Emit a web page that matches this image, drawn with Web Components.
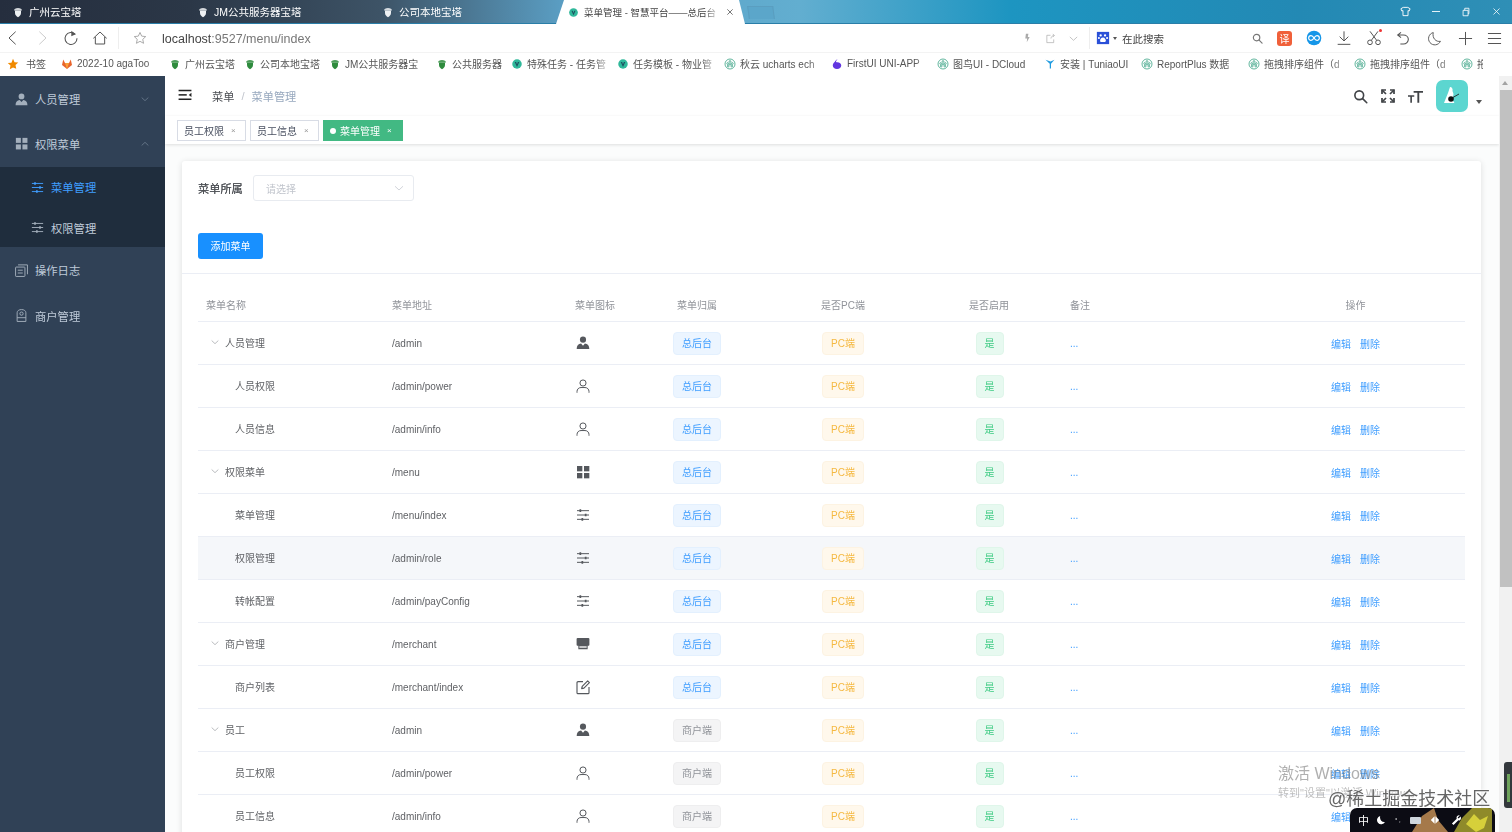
<!DOCTYPE html>
<html lang="zh">
<head>
<meta charset="utf-8">
<title>菜单管理</title>
<style>
  html, body { margin: 0; height: 832px; overflow: hidden; background: #fff; }
  body {
    display: flex;
    flex-direction: column;
    font-family: "Liberation Sans", "Noto Sans CJK SC", sans-serif;
    color: #606266;
  }
  /* the reference is a soft, rescaled capture */
  body > * { filter: blur(.3px); }
</style>
</head>
<body>
<browser-tabs></browser-tabs>
<browser-toolbar></browser-toolbar>
<bookmark-bar></bookmark-bar>
<app-shell></app-shell>
<desktop-marks></desktop-marks>

<script>
const ICONS = {
  personSolid: '<circle cx="12" cy="7" r="4.6" fill="currentColor"/><path d="M2.5 21c0-5 2.6-8 6.6-8.2L12 16l2.9-3.2c4 .2 6.6 3.2 6.6 8.2z" fill="currentColor"/>',
  personLine: '<g fill="none" stroke="currentColor" stroke-width="1.5"><circle cx="12" cy="7.5" r="4.6"/><path d="M3 21.5v-1.2c0-3.4 2.6-6 6-6h6c3.4 0 6 2.6 6 6v1.2" stroke-linecap="round"/></g>',
  grid: '<g fill="currentColor"><rect x="3" y="3" width="8" height="8"/><rect x="13.5" y="3" width="8" height="8"/><rect x="3" y="13.5" width="8" height="8"/><rect x="13.5" y="13.5" width="8" height="8"/></g>',
  sliders: '<g fill="none" stroke="currentColor" stroke-width="1.5"><path d="M3 5.5h18M3 12h18M3 18.5h18"/><path d="M8 3.5v4M16 10v4M11 16.500v4" stroke-width="2.6"/></g>',
  store: '<path d="M4 3h16a1.6 1.6 0 0 1 1.6 1.6V13c0 1-.7 1.7-1.6 1.7h-1V20H5v-5.3H4c-.9 0-1.6-.7-1.6-1.7V4.6A1.6 1.6 0 0 1 4 3z" fill="currentColor"/><path d="M6.5 15.5h11v2h-11z" fill="#fff"/>',
  edit: '<g fill="none" stroke="currentColor" stroke-width="1.7"><path d="M12 4H4.5A1.5 1.5 0 0 0 3 5.5v15A1.5 1.5 0 0 0 4.5 22h15a1.5 1.5 0 0 0 1.5-1.5V12"/><path d="M10 14.500l.8-3.500L19 2.800l2.600 2.600-8.200 8.300z" stroke-linejoin="round"/></g>',
  log: '<g fill="none" stroke="currentColor" stroke-width="1.5"><rect x="2.5" y="6.5" width="15" height="15" rx="1"/><path d="M6.5 3h15v15M6 11.5h8M6 16h8"/></g>',
  merchant: '<g fill="none" stroke="currentColor" stroke-width="1.5"><path d="M5 21.5V7.5C5 4.5 8 2.500 12 2.500s7 2 7 5v14z" stroke-linejoin="round"/><circle cx="12" cy="9" r="2.6"/><path d="M5 15.500h14"/></g>',
  chevron: '<path d="M4 8.500l8 7.500 8-7.500" fill="none" stroke="currentColor" stroke-width="1.5"/>',
  chevronUp: '<path d="M4 15.500l8-7.500 8 7.500" fill="none" stroke="currentColor" stroke-width="1.5"/>',
  hamburger: '<g fill="currentColor"><rect x="1" y="3" width="22" height="2.6"/><rect x="1" y="10.500" width="14" height="2.6"/><rect x="1" y="18" width="22" height="2.6"/><path d="M23 8v7.500l-4.500-3.700z"/></g>',
  search: '<g fill="none" stroke="currentColor" stroke-width="2.6"><circle cx="10" cy="10" r="7"/><path d="M15.500 15.500l6.500 6.500" stroke-linecap="round"/></g>',
  fullscreen: '<g fill="none" stroke="currentColor" stroke-width="2.6"><path d="M3 9V3h6M21 9V3h-6M3 15v6h6M21 15v6h-6"/><path d="M3 3l6 6M21 3l-6 6M3 21l6-6M21 21l-6-6"/></g>',
  textSize: '<g fill="currentColor"><path d="M9 3h15v2.800h-6V22h-3V5.800H9z"/><path d="M0 10h10v2.400H6.300V22H3.700v-9.600H0z"/></g>',
  acorn: '<path d="M6 9h12v5c0 4-3 7-6 8.500C9 21 6 18 6 14z" fill="currentColor"/><path d="M4 9c0-2.500 3-5 8-5s8 2.500 8 5z" fill="currentColor" opacity=".85"/>',
  vue: '<circle cx="12" cy="12" r="9.5" fill="#2fb89a"/><path d="M7.500 8h2.800L12 13l1.700-5h2.800L12 18z" fill="#1e4d5f"/>',
  globe: '<g fill="none" stroke="#2f9e7e" stroke-width="1.5"><circle cx="12" cy="12" r="10"/><circle cx="12" cy="7" r="1.8"/><circle cx="7.500" cy="11" r="1.8"/><circle cx="16.500" cy="11" r="1.8"/><circle cx="12" cy="12.500" r="1.4"/><circle cx="8.500" cy="16" r="1.8"/><circle cx="15.500" cy="16" r="1.8"/></g>',
  back: '<path d="M16 2.500L6 12l10 9.500" fill="none" stroke="currentColor" stroke-width="1.5"/>',
  forward: '<path d="M8 2.500L18 12 8 21.500" fill="none" stroke="currentColor" stroke-width="1.5"/>',
  reload: '<path d="M18.500 6.500A9 9 0 1 0 21 12.500" fill="none" stroke="currentColor" stroke-width="1.6"/><path d="M12.500 1l6.500 5.500-6.500 3z" fill="currentColor"/>',
  home: '<path d="M2 12.500L12 3l10 9.500M5 10.500V21h14V10.500" fill="none" stroke="currentColor" stroke-width="1.5"/>',
  star: '<path d="M12 2.500l2.900 6.300 6.900.8-5.100 4.700 1.400 6.800-6.100-3.400-6.100 3.400 1.400-6.800-5.100-4.700 6.900-.8z" fill="none" stroke="currentColor" stroke-width="1.4"/>',
  starFill: '<path d="M12 1.500l3.100 6.800 7.400.9-5.500 5 1.500 7.300L12 18.900l-6.500 3.600L7 15.200l-5.500-5 7.400-.9z" fill="#f08a00"/>',
  bolt: '<path d="M13 2H7L5.500 13H10l-1 9 7-12.500h-4.500z" fill="currentColor"/>',
  share: '<path d="M12 5H4v16h15v-7M13 12c.5-4 3-6.500 7-6.500M17 2l3.500 3.500L17 9" fill="none" stroke="currentColor" stroke-width="1.5"/>',
  download: '<path d="M12 2v14M5.500 10l6.500 6.500 6.500-6.500M2.500 21.500h19" fill="none" stroke="currentColor" stroke-width="1.5"/>',
  scissors: '<g fill="none" stroke="currentColor" stroke-width="1.5"><circle cx="6" cy="18.500" r="3.500"/><circle cx="18" cy="18.500" r="3.500"/><path d="M8 15.500L18 2M16 15.500L6 2"/></g>',
  undo: '<path d="M9 3.500L4 7.500l5 4M4 7.500h8.500c4.500 0 7.500 3 7.500 6.500s-3 7-7.500 7H8" fill="none" stroke="currentColor" stroke-width="1.6"/>',
  moon: '<path d="M10 2.500a10 10 0 1 0 11.500 14c-7 1.500-13.500-5-11.500-14z" fill="none" stroke="currentColor" stroke-width="1.5"/>',
  moonFill: '<path d="M10 2.500a10 10 0 1 0 11.500 14c-7 1.500-13.500-5-11.500-14z" fill="currentColor"/>',
  plus: '<path d="M12 1.500v21M1.500 12h21" fill="none" stroke="currentColor" stroke-width="1.6"/>',
  menu: '<path d="M1.500 4h21M1.500 12h21M1.500 20h21" fill="none" stroke="currentColor" stroke-width="1.6"/>',
  shirt: '<path d="M7 3h10l5 3-2 5-2.500-1v11h-11V10L4 11 2 6z" fill="none" stroke="currentColor" stroke-width="2"/>',
  restore: '<path d="M5 8h12v13H5zM9 8V3h10v13h-2" fill="none" stroke="currentColor" stroke-width="2"/>',
  close: '<path d="M4 4l16 16M20 4L4 20" fill="none" stroke="currentColor" stroke-width="2"/>',
  paw: '<rect x="1.500" y="1.500" width="21" height="21" fill="#2a50d8"/><g fill="#fff"><circle cx="8" cy="7.500" r="2"/><circle cx="15.500" cy="7.500" r="2"/><circle cx="5" cy="12" r="1.8"/><circle cx="19" cy="12" r="1.8"/><path d="M12 11c3 0 5 3.500 5 5.500S14 19 12 19s-5 .5-5-2.500 2-5.500 5-5.500z"/></g>',
  gitlab: '<path d="M12 22L2 14l2.500-11L8 10h8l3.500-7L22 14z" fill="#e8642d"/><path d="M12 22L8 10h8z" fill="#f9a13a"/>',
  firstui: '<path d="M13 2c-1 2-3 3.500-3 5.500.5 1 1.500 1 2.500 1 5 0 8 3 8 6.500S17 22 12 22s-8.500-3-8.500-7.500c0-4 4-6 5-8.500 1-1.500 3-3 4.500-4z" fill="#6236e0"/>',
  tuniao: '<path d="M3 3.500L13 7l8-3.500-7 8V21h-2.500v-9.500z" fill="#1f9be0"/>',
  infinity: '<circle cx="12" cy="12" r="11" fill="#1596e8"/><path d="M12 12c-1.500-2.500-3-3.500-4.500-3.500a3.500 3.500 0 0 0 0 7c1.500 0 3-1 4.500-3.500s3-3.500 4.500-3.500a3.500 3.500 0 0 1 0 7c-1.500 0-3-1-4.500-3.500z" fill="none" stroke="#fff" stroke-width="1.8"/>',
  wrench: '<path d="M21 3l-4.500 4.500-2-2L19 1c-3-1-7 1-7 5 0 1 .2 1.500.5 2L2 18.500 5.500 22 16 11.500c4 1.500 7.500-3.500 5-8.500z" fill="currentColor"/>',
  arrows: '<path d="M11 3v18l-9-9zM13 3l9 9-9 9z" fill="currentColor"/>'
};

class UiIcon extends HTMLElement {
  connectedCallback() {
    const size = this.getAttribute('size') || 16;
    this.attachShadow({ mode: 'open' });
    this.shadowRoot.innerHTML = `
      <style>
        :host { display: inline-flex; flex: none; line-height: 0; }
      </style>
      <svg width="${size}" height="${size}" viewBox="0 0 24 24">${ICONS[this.getAttribute('name')] || ''}</svg>
    `;
  }
}
customElements.define('ui-icon', UiIcon);

class BrowserTabs extends HTMLElement {
  connectedCallback() {
    this.attachShadow({ mode: 'open' });
    this.shadowRoot.innerHTML = `
      <style>
        :host {
          display: flex;
          align-items: center;
          height: 24px;
          flex: none;
          color: #fff;
          font-size: 10.5px;
          box-sizing: border-box;
          padding-left: 12px;
          border-bottom: 1px solid #2a7ea8;
          background: linear-gradient(90deg, #252e3e 0, #2b3747 190px, #3d5366 380px, #5a9dc2 560px, #62aed0 800px, #1d95c1 1010px, #2389b4 1300px, #2f8fb6 100%);
        }
        .tab { display: flex; align-items: center; gap: 5px; width: 185px; flex: none; white-space: nowrap; }
        .tab ui-icon { color: #eef1f3; }
        .active {
          width: 189px;
          height: 24px;
          padding: 0 11px 0 12px;
          box-sizing: border-box;
          margin-top: 1px;
          background: #fff;
          color: #444;
          clip-path: polygon(8px 0, calc(100% - 6px) 0, 100% 100%, 0 100%);
        }
        .active span { flex: 1; overflow: hidden; font-size: 9.5px; -webkit-mask-image: linear-gradient(90deg, #000 88%, transparent); }
        .active .x { color: #333; }
        .ghost { width: 24px; height: 12px; margin: 2px 0 0 3px; border: 1px solid #5a9ec0; border-bottom: 0; background: #5ba6ca; transform: skewX(8deg); }
        .win { margin-left: auto; display: flex; gap: 21px; padding-right: 11px; align-items: center; }
      </style>
      <div class="tab"><ui-icon name="acorn" size="12"></ui-icon><span>广州云宝塔</span></div>
      <div class="tab"><ui-icon name="acorn" size="12"></ui-icon><span>JM公共服务器宝塔</span></div>
      <div class="tab" style="width:174px"><ui-icon name="acorn" size="12"></ui-icon><span>公司本地宝塔</span></div>
      <div class="tab active"><ui-icon name="vue" size="11"></ui-icon><span>菜单管理 - 智慧平台——总后台</span><ui-icon class="x" name="close" size="8"></ui-icon></div>
      <div class="ghost"></div>
      <div class="win">
        <ui-icon name="shirt" size="11"></ui-icon>
        <span style="width:8px;height:1px;background:#e4f2f8"></span>
        <ui-icon name="restore" size="10"></ui-icon>
        <ui-icon name="close" size="9"></ui-icon>
      </div>
    `;
  }
}
customElements.define('browser-tabs', BrowserTabs);

class BrowserToolbar extends HTMLElement {
  connectedCallback() {
    this.attachShadow({ mode: 'open' });
    this.shadowRoot.innerHTML = `
      <style>
        :host {
          display: flex;
          align-items: center;
          height: 28px;
          flex: none;
          box-sizing: border-box;
          padding: 0 10px 0 5px;
          background: #fff;
          color: #555;
          font-size: 12px;
        }
        .nav { display: flex; align-items: center; gap: 13px; }
        .url { margin-left: 15px; color: #777; font-size: 12.5px; padding-top: 1px; }
        .url b { font-weight: 400; color: #444; }
        .sep { width: 1px; height: 22px; background: #eee; margin: 0 10px; }
        .mid { margin-left: auto; display: flex; align-items: center; gap: 12px; color: #aaa; margin-right: 10px; }
        .search { display: flex; align-items: center; gap: 3px; width: 173px; box-sizing: border-box; padding-right: 6px; color: #444; font-size: 10.5px; }
        .search i { width: 0; height: 0; border: 2px solid transparent; border-top: 3px solid #555; margin: 3px 2px 0 0; }
        .search .g { margin-left: auto; color: #777; }
        .tools { display: flex; align-items: center; gap: 14px; margin-left: 8px; }
        .yi { width: 15px; height: 15px; background: #f0603a; color: #fff; border-radius: 3px; font-size: 10px; display: flex; align-items: center; justify-content: center; }
        .dot { position: relative; }
        .dot::after { content: ""; position: absolute; right: 0; top: -1px; width: 3px; height: 3px; background: #e33; border-radius: 50%; }
      </style>
      <div class="nav">
        <ui-icon name="back" size="16"></ui-icon>
        <ui-icon name="forward" size="16" style="color:#ccc"></ui-icon>
        <ui-icon name="reload" size="16"></ui-icon>
        <ui-icon name="home" size="16"></ui-icon>
      </div>
      <div class="sep" style="margin-right:14px"></div>
      <ui-icon name="star" size="14" style="color:#999"></ui-icon>
      <span class="url"><b>localhost</b>:9527/menu/index</span>
      <div class="mid">
        <ui-icon name="bolt" size="10"></ui-icon>
        <ui-icon name="share" size="11"></ui-icon>
        <ui-icon name="chevron" size="11"></ui-icon>
      </div>
      <div class="sep" style="margin:0 6px 0 0"></div>
      <div class="search">
        <ui-icon name="paw" size="14"></ui-icon><i></i><span>在此搜索</span>
        <ui-icon class="g" name="search" size="11"></ui-icon>
      </div>
      <div class="tools">
        <span class="yi">译</span>
        <ui-icon name="infinity" size="16"></ui-icon>
        <ui-icon name="download" size="16"></ui-icon>
        <ui-icon class="dot" name="scissors" size="16" style="margin-right:-3px"></ui-icon>
        <ui-icon name="undo" size="16" style="margin-left:2px"></ui-icon>
        <ui-icon name="moon" size="15" style="margin-left:2px"></ui-icon>
        <ui-icon name="plus" size="15" style="margin-left:2px"></ui-icon>
        <ui-icon name="menu" size="15"></ui-icon>
      </div>
    `;
  }
}
customElements.define('browser-toolbar', BrowserToolbar);

class BookmarkItem extends HTMLElement {
  connectedCallback() {
    const icon = this.getAttribute('icon');
    const gap = this.getAttribute('gap') || 4;
    const fade = this.hasAttribute('fade') ? '-webkit-mask-image: linear-gradient(90deg, #000 82%, rgba(0,0,0,.25));' : '';
    this.attachShadow({ mode: 'open' });
    this.shadowRoot.innerHTML = `
      <style>
        :host {
          display: flex;
          align-items: center;
          gap: ${gap}px;
          flex: none;
          box-sizing: border-box;
          width: ${this.getAttribute('width')}px;
          padding-right: 8px;
          white-space: nowrap;
        }
        span { overflow: hidden; flex: 1; ${fade} }
        ui-icon { color: #2e8b3d; }
      </style>
      <ui-icon name="${icon}" size="12"></ui-icon><span><slot></slot></span>
    `;
  }
}
customElements.define('bookmark-item', BookmarkItem);

class BookmarkBar extends HTMLElement {
  connectedCallback() {
    const items = [
      ['starFill', 54, '书签', 0, 7],
      ['gitlab', 108, '2022-10 agaToo', 1],
      ['acorn', 75, '广州云宝塔'],
      ['acorn', 85, '公司本地宝塔'],
      ['acorn', 107, 'JM公共服务器宝', 1],
      ['acorn', 75, '公共服务器'],
      ['vue', 106, '特殊任务 - 任务管', 1],
      ['vue', 107, '任务模板 - 物业管', 1],
      ['globe', 107, '秋云 ucharts ech', 1],
      ['firstui', 106, 'FirstUI UNI-APP', 1],
      ['globe', 107, '图鸟UI - DCloud'],
      ['tuniao', 97, '安装 | TuniaoUI'],
      ['globe', 107, 'ReportPlus 数据', 1],
      ['globe', 106, '拖拽排序组件（d', 1],
      ['globe', 107, '拖拽排序组件（d', 1],
      ['globe', 30, '拖']
    ];
    this.attachShadow({ mode: 'open' });
    this.shadowRoot.innerHTML = `
      <style>
        :host {
          display: flex;
          align-items: center;
          height: 24px;
          flex: none;
          box-sizing: border-box;
          padding: 0 0 2px 7px;
          background: #fff;
          border-top: 1px solid #f3f3f3;
          color: #555;
          font-size: 10px;
          overflow: hidden;
        }
      </style>
      ${items.map(([icon, w, text, fade, gap]) => `<bookmark-item icon="${icon}" width="${w}" gap="${gap || 4}"${fade ? ' fade' : ''}>${text}</bookmark-item>`).join('')}
    `;
  }
}
customElements.define('bookmark-bar', BookmarkBar);

class SideItem extends HTMLElement {
  connectedCallback() {
    const sub = this.hasAttribute('sub');
    const arrow = this.getAttribute('arrow');
    const active = this.hasAttribute('active');
    this.attachShadow({ mode: 'open' });
    this.shadowRoot.innerHTML = `
      <style>
        :host {
          display: flex;
          align-items: center;
          gap: 6px;
          height: ${sub ? 40 : 45}px;
          box-sizing: border-box;
          padding-left: ${sub ? 30 : 14}px;
          padding-right: 15px;
          font-size: 11.3px;
          color: ${active ? '#409eff' : '#bfcbd9'};
          background: ${sub ? '#1f2d3d' : 'transparent'};
        }
        .lead { color: ${active ? '#409eff' : '#a3afbc'}; }
        .arrow { margin-left: auto; color: #7f8ea0; }
      </style>
      <ui-icon class="lead" name="${this.getAttribute('icon')}" size="15"></ui-icon>
      <span><slot></slot></span>
      ${arrow ? `<ui-icon class="arrow" name="${arrow}" size="10"></ui-icon>` : ''}
    `;
  }
}
customElements.define('side-item', SideItem);

class SideMenu extends HTMLElement {
  connectedCallback() {
    this.attachShadow({ mode: 'open' });
    this.shadowRoot.innerHTML = `
      <style>
        :host { display: block; width: 165px; flex: none; background: #304156; }
      </style>
      <side-item icon="personSolid" arrow="chevron" style="height:46px">人员管理</side-item>
      <side-item icon="grid" arrow="chevronUp" style="padding-bottom:2px">权限菜单</side-item>
      <side-item icon="sliders" sub active>菜单管理</side-item>
      <side-item icon="sliders" sub style="padding-top:1px">权限管理</side-item>
      <side-item icon="log" style="height:47px;padding-bottom:1px">操作日志</side-item>
      <side-item icon="merchant" style="padding-bottom:2px">商户管理</side-item>
    `;
  }
}
customElements.define('side-menu', SideMenu);

class TopHeader extends HTMLElement {
  connectedCallback() {
    this.attachShadow({ mode: 'open' });
    this.shadowRoot.innerHTML = `
      <style>
        :host {
          display: flex;
          align-items: center;
          height: 40px;
          flex: none;
          box-sizing: border-box;
          padding: 0 17px 0 13px;
          background: #fff;
          font-size: 11.2px;
          color: #4a4d52;
        }
        .crumb { display: flex; align-items: center; margin: -1px 0 0 20px; gap: 7px; }
        .crumb i { font-style: normal; color: #c0c4cc; }
        .crumb em { font-style: normal; color: #97a8be; }
        .right { margin-left: auto; display: flex; align-items: center; gap: 12px; color: #404347; }
        .avatar { display: block; margin-left: 1px; margin-right: 1px; line-height: 0; }
        .caret { width: 0; height: 0; border: 3px solid transparent; border-top: 4px solid #555; margin: 14px 0 0 -5px; }
      </style>
      <ui-icon name="hamburger" size="14" style="color:#222;margin-top:-2px"></ui-icon>
      <div class="crumb"><span>菜单</span><i>/</i><em>菜单管理</em></div>
      <div class="right">
        <ui-icon name="search" size="15"></ui-icon>
        <ui-icon name="fullscreen" size="16"></ui-icon>
        <ui-icon name="textSize" size="15"></ui-icon>
        <div class="avatar">
          <svg width="32" height="32" viewBox="0 0 32 32">
            <rect width="32" height="32" rx="7" fill="#5cd6d0"/>
            <path d="M14 7c2 0 3 2 2.500 4l1 3-1 6 2 3H8l2-5 2-5z" fill="#fff"/>
            <circle cx="15" cy="19" r="2.800" fill="#111"/>
            <path d="M16 18l7-4" stroke="#111" stroke-width=".8"/>
          </svg>
        </div>
        <div class="caret"></div>
      </div>
    `;
  }
}
customElements.define('top-header', TopHeader);

class TagStrip extends HTMLElement {
  connectedCallback() {
    this.attachShadow({ mode: 'open' });
    this.shadowRoot.innerHTML = `
      <style>
        :host {
          display: flex;
          align-items: flex-start;
          gap: 4px;
          height: 28px;
          flex: none;
          box-sizing: border-box;
          padding: 4px 0 0 12px;
          background: #fff;
          box-shadow: 0 1px 3px rgba(0,0,0,.12);
          position: relative;
          font-size: 10px;
          color: #495060;
        }
        .tag {
          display: flex;
          align-items: center;
          height: 21px;
          box-sizing: border-box;
          width: 69px;
          padding-left: 6px;
          gap: 6px;
          border: 1px solid #d8dce5;
          background: #fff;
        }
        .tag small { font-size: 8px; color: #999; margin-left: 1px; }
        .on { width: 80px; background: #42b983; border-color: #42b983; color: #fff; }
        .on small { color: #fff; }
        .on i { width: 6px; height: 6px; border-radius: 50%; background: #fff; margin-right: -2px; }
      </style>
      <div class="tag"><span>员工权限</span><small>×</small></div>
      <div class="tag"><span>员工信息</span><small>×</small></div>
      <div class="tag on"><i></i><span>菜单管理</span><small>×</small></div>
    `;
  }
}
customElements.define('tag-strip', TagStrip);

class MenuFilter extends HTMLElement {
  connectedCallback() {
    this.attachShadow({ mode: 'open' });
    this.shadowRoot.innerHTML = `
      <style>
        :host {
          display: flex;
          flex-direction: column;
          align-items: flex-start;
          gap: 32px;
          padding: 14px 16px;
          border-bottom: 1px solid #ebeef5;
          font-size: 11.2px;
        }
        .row { display: flex; align-items: center; gap: 10px; }
        label { color: #4f5257; width: 45px; white-space: nowrap; text-shadow: 0 0 .4px #4f5257; margin-top: -1px; }
        .select {
          display: flex;
          align-items: center;
          justify-content: space-between;
          width: 161px;
          height: 26px;
          box-sizing: border-box;
          padding: 0 8px 0 12px;
          border: 1px solid #e8ebf0;
          border-radius: 3px;
          color: #c0c4cc;
          font-size: 10px;
        }
        button {
          width: 65px;
          height: 26px;
          padding: 0 0 2px;
          border: 0;
          border-radius: 3px;
          background: #1890ff;
          color: #fff;
          font: inherit;
          font-size: 10px;
        }
      </style>
      <div class="row">
        <label>菜单所属</label>
        <div class="select"><span>请选择</span><ui-icon name="chevron" size="12"></ui-icon></div>
      </div>
      <button>添加菜单</button>
    `;
  }
}
customElements.define('menu-filter', MenuFilter);

class StatusTag extends HTMLElement {
  connectedCallback() {
    const kinds = {
      blue: ['#ecf5ff', '#e3f0fe', '#409eff'],
      gray: ['#f4f4f5', '#eeeeef', '#909399'],
      orange: ['#fff8ec', '#fdf3e2', '#f5b942'],
      green: ['#e7f9f0', '#dff6ea', '#3ccb82']
    };
    const [bg, border, color] = kinds[this.getAttribute('kind')];
    this.attachShadow({ mode: 'open' });
    this.shadowRoot.innerHTML = `
      <style>
        :host {
          display: inline-flex;
          align-items: center;
          height: 23px;
          box-sizing: border-box;
          padding: 0 8px 1px;
          border: 1px solid ${border};
          border-radius: 4px;
          background: ${bg};
          color: ${color};
          font-size: 10px;
          white-space: nowrap;
        }
      </style>
      <slot></slot>
    `;
  }
}
customElements.define('status-tag', StatusTag);

class MenuRow extends HTMLElement {
  connectedCallback() {
    const d = this.data;
    this.attachShadow({ mode: 'open' });
    this.shadowRoot.innerHTML = `
      <style>
        :host {
          display: grid;
          grid-template-columns: var(--cols);
          align-items: center;
          height: 43px;
          box-sizing: border-box;
          border-bottom: 1px solid #ebeef5;
          font-size: 10px;
          color: #606266;
          background: ${d.hover ? '#f5f7fa' : '#fff'};
        }
        .name { display: flex; align-items: center; gap: 5px; margin-top: -2px; padding-left: ${d.parent ? 12 : 37}px; white-space: nowrap; }
        .name ui-icon { color: #909399; }
        .pad { padding-left: 8px; }
        .icon { padding-left: 8px; margin-top: -1px; display: flex; color: #55585d; }
        .mid { display: flex; justify-content: center; }
        .note { padding-left: 8px; color: #409eff; margin-top: 1px; }
        .ops { display: flex; justify-content: center; gap: 9px; color: #409eff; margin-top: 1px; }
      </style>
      <div class="name">${d.parent ? '<ui-icon name="chevron" size="10"></ui-icon>' : ''}<span>${d.name}</span></div>
      <div class="pad">${d.path}</div>
      <div class="icon"><ui-icon name="${d.icon}" size="16"></ui-icon></div>
      <div class="mid"><status-tag kind="${d.owner === '总后台' ? 'blue' : 'gray'}">${d.owner}</status-tag></div>
      <div class="mid"><status-tag kind="orange">PC端</status-tag></div>
      <div class="mid"><status-tag kind="green" style="margin-left:1px">是</status-tag></div>
      <div class="note">...</div>
      <div class="ops"><span>编辑</span><span>删除</span></div>
    `;
  }
}
customElements.define('menu-row', MenuRow);

class MenuTable extends HTMLElement {
  connectedCallback() {
    const rows = [
      { name: '人员管理', path: '/admin', icon: 'personSolid', owner: '总后台', parent: true },
      { name: '人员权限', path: '/admin/power', icon: 'personLine', owner: '总后台' },
      { name: '人员信息', path: '/admin/info', icon: 'personLine', owner: '总后台' },
      { name: '权限菜单', path: '/menu', icon: 'grid', owner: '总后台', parent: true },
      { name: '菜单管理', path: '/menu/index', icon: 'sliders', owner: '总后台' },
      { name: '权限管理', path: '/admin/role', icon: 'sliders', owner: '总后台', hover: true },
      { name: '转帐配置', path: '/admin/payConfig', icon: 'sliders', owner: '总后台' },
      { name: '商户管理', path: '/merchant', icon: 'store', owner: '总后台', parent: true },
      { name: '商户列表', path: '/merchant/index', icon: 'edit', owner: '总后台' },
      { name: '员工', path: '/admin', icon: 'personSolid', owner: '商户端', parent: true },
      { name: '员工权限', path: '/admin/power', icon: 'personLine', owner: '商户端' },
      { name: '员工信息', path: '/admin/info', icon: 'personLine', owner: '商户端' }
    ];
    this.attachShadow({ mode: 'open' });
    this.shadowRoot.innerHTML = `
      <style>
        :host {
          display: block;
          padding: 14px 16px 0;
          --cols: 186px 183px 57px 146px 146px 146px 184px 219px;
        }
        .head {
          display: grid;
          grid-template-columns: var(--cols);
          align-items: center;
          height: 34px;
          box-sizing: border-box;
          border-bottom: 1px solid #ebeef5;
          font-size: 10px;
          color: #909399;
          white-space: nowrap;
        }
        .head div { padding-left: 8px; }
        .head .c { padding: 0; text-align: center; }
      </style>
      <div class="head">
        <div>菜单名称</div><div>菜单地址</div><div>菜单图标</div>
        <div class="c">菜单归属</div><div class="c">是否PC端</div><div class="c">是否启用</div>
        <div>备注</div><div class="c">操作</div>
      </div>
      <div id="rows"></div>
    `;
    const box = this.shadowRoot.getElementById('rows');
    rows.forEach(r => {
      const row = document.createElement('menu-row');
      row.data = r;
      box.appendChild(row);
    });
  }
}
customElements.define('menu-table', MenuTable);

class AppShell extends HTMLElement {
  connectedCallback() {
    this.attachShadow({ mode: 'open' });
    this.shadowRoot.innerHTML = `
      <style>
        :host { display: flex; flex: 1; min-height: 0; overflow: hidden; }
        main { flex: 1; min-width: 0; display: flex; flex-direction: column; }
        .content { flex: 1; min-height: 0; overflow: hidden; padding: 17px 18px 0 17px; background: #fbfcfc; }
        .card { background: #fff; border-radius: 3px; box-shadow: 0 1px 6px rgba(0,0,0,.12); height: 800px; }
        .scroll { width: 13px; flex: none; background: #f1f1f1; position: relative; padding-top: 14px; box-sizing: border-box; }
        .scroll::before { content: ""; position: absolute; left: 3px; top: 5px; border: 3.5px solid transparent; border-bottom: 4px solid #a3a3a3; border-top: 0; }
        .scroll div { height: 497px; background: #c1c1c1; margin-left: 1px; }
      </style>
      <side-menu></side-menu>
      <main>
        <top-header></top-header>
        <tag-strip></tag-strip>
        <div class="content">
          <div class="card">
            <menu-filter></menu-filter>
            <menu-table></menu-table>
          </div>
        </div>
      </main>
      <div class="scroll"><div></div></div>
    `;
  }
}
customElements.define('app-shell', AppShell);

// activation text, site watermark and the tray that the capture left over the page
class DesktopMarks extends HTMLElement {
  connectedCallback() {
    this.attachShadow({ mode: 'open' });
    this.shadowRoot.innerHTML = `
      <style>
        :host { position: fixed; inset: 0; pointer-events: none; display: block; }
        .act { position: absolute; left: 1278px; top: 760px; color: rgba(110,110,110,.55); font-size: 16px; white-space: nowrap; }
        .act2 { position: absolute; left: 1278px; top: 784px; color: rgba(110,110,110,.45); font-size: 11px; white-space: nowrap; }
        .wm { position: absolute; left: 1328px; top: 784px; color: #666; font-size: 18px; white-space: nowrap; text-shadow: 0 0 2px #fff, 0 0 2px #fff; }
        .tray {
          position: absolute;
          left: 1350px;
          top: 808px;
          width: 145px;
          height: 24px;
          display: flex;
          align-items: center;
          box-sizing: border-box;
          padding-left: 8px;
          border-radius: 7px 7px 0 0;
          overflow: hidden;
          color: #fff;
          font-size: 11px;
          background: #0c0c14;
        }
        .tray svg.art { position: absolute; left: 0; top: 0; }
        .tray > *:not(.art) { position: relative; }
        .meter {
          position: absolute;
          left: 1504px;
          top: 762px;
          width: 8px;
          height: 46px;
          box-sizing: border-box;
          border-radius: 3px 0 0 3px;
          background: #33383c;
        }
        .meter i { position: absolute; left: 3px; top: 12px; width: 3px; height: 28px; background: #6fa35c; }
      </style>
      <div class="act">激活 Windows</div>
      <div class="act2">转到"设置"以激活 Windows。</div>
      <div class="wm">@稀土掘金技术社区</div>
      <div class="meter"><i></i></div>
      <div class="tray">
        <svg class="art" width="145" height="24" viewBox="0 0 145 24">
          <path d="M62 24L72 8 84 0l4 12 10 12z" fill="#a5794a"/>
          <path d="M104 24l8-14 10-10h20v24z" fill="#8f8a2a"/>
          <path d="M116 16l8-10 6 6 8-4-4 12-8 4z" fill="#d6d03a"/>
        </svg>
        <span>中</span>
        <ui-icon name="moonFill" size="10" style="margin-left:7px"></ui-icon>
        <span style="font-size:6px;margin-left:9px">° ,</span>
        <span style="width:11px;height:7px;background:#cfd6dc;border-radius:1px;margin-left:9px"></span>
        <ui-icon name="arrows" size="10" style="margin-left:9px"></ui-icon>
        <ui-icon name="wrench" size="11" style="margin-left:11px"></ui-icon>
      </div>
    `;
  }
}
customElements.define('desktop-marks', DesktopMarks);
</script>
</body>
</html>
